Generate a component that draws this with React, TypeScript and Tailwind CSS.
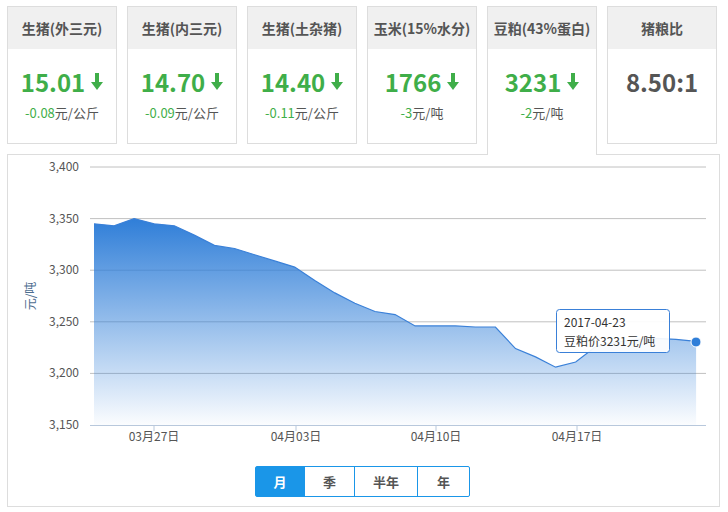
import React from "react";

const cards = [
  { title: "生猪(外三元)", value: "15.01", change: "-0.08", unit: "元/公斤" },
  { title: "生猪(内三元)", value: "14.70", change: "-0.09", unit: "元/公斤" },
  { title: "生猪(土杂猪)", value: "14.40", change: "-0.11", unit: "元/公斤" },
  { title: "玉米(15%水分)", value: "1766", change: "-3", unit: "元/吨" },
  { title: "豆粕(43%蛋白)", value: "3231", change: "-2", unit: "元/吨", active: true },
];

const values = [
  3345, 3343, 3350, 3345, 3343, 3334, 3324, 3321, 3315, 3309, 3303, 3290, 3278, 3268, 3260, 3257,
  3246, 3246, 3246, 3245, 3245, 3224, 3216, 3206, 3211, 3226, 3230, 3233, 3234, 3233, 3231,
];

const yOf = (v: number) => 166 + ((3400 - v) / 50) * 51.6;
const xOf = (i: number) => 93 + i * 20.07;

function DownArrow() {
  return (
    <svg width="12" height="18" viewBox="0 0 12 18" className="inline-block">
      <rect x="4" y="0" width="4" height="10" fill="#3fae49" />
      <path d="M0 9 L12 9 L6 17 Z" fill="#3fae49" />
    </svg>
  );
}

function Chart() {
  const pts = values.map((v, i) => `${xOf(i).toFixed(1)},${yOf(v).toFixed(1)}`);
  const line = "M" + pts.join(" L");
  const area = line + ` L${xOf(values.length - 1)},424 L93,424 Z`;
  const grid = [3400, 3350, 3300, 3250, 3200];
  const ticks = [
    { x: 153, l: "03月27日" },
    { x: 295, l: "04月03日" },
    { x: 435, l: "04月10日" },
    { x: 576, l: "04月17日" },
  ];
  return (
    <svg width="713" height="300" viewBox="7 154 713 300" className="block">
      <defs>
        <linearGradient id="g" x1="0" y1="0" x2="0" y2="1">
          <stop offset="0" stopColor="#2f7ed8" stopOpacity="1" />
          <stop offset="1" stopColor="#2f7ed8" stopOpacity="0.02" />
        </linearGradient>
      </defs>
      {grid.map((g) => (
        <line key={g} x1="89" x2="705" y1={yOf(g)} y2={yOf(g)} stroke="#c0c0c0" strokeWidth="1" />
      ))}
      <path d={area} fill="url(#g)" />
      <path d={line} fill="none" stroke="#3a80d8" strokeWidth="1.2" />
      <line x1="89" x2="705" y1="424.5" y2="424.5" stroke="#b8c8dc" />
      {ticks.map((t) => (
        <g key={t.l}>
          <line x1={t.x} x2={t.x} y1="424" y2="430" stroke="#b8c8dc" />
          <text x={t.x} y="440" fontSize="12" fill="#555" textAnchor="middle">{t.l}</text>
        </g>
      ))}
      {[3400, 3350, 3300, 3250, 3200, 3150].map((g) => (
        <text key={g} x="78" y={yOf(g) + 4} fontSize="12" fill="#555" textAnchor="end">
          {g.toLocaleString("en-US")}
        </text>
      ))}
      <text x="34" y="295" fontSize="12" fill="#4d6d8f" textAnchor="middle" transform="rotate(-90 34 295)">元/吨</text>
      <circle cx="695" cy="341" r="5" fill="#2f7ed8" stroke="#fff" strokeWidth="1" />
      <rect x="555.5" y="308.5" width="113" height="43" rx="3" fill="#fff" fillOpacity="0.92" stroke="#3a80d8" />
      <text x="563" y="326" fontSize="12" fill="#333">2017-04-23</text>
      <text x="563" y="345" fontSize="12" fill="#333">豆粕价3231元/吨</text>
    </svg>
  );
}

export default function App() {
  return (
    <div className="w-[728px] h-[512px] bg-white" style={{ fontFamily: '"Noto Sans CJK SC", "Noto Sans", sans-serif' }}>
      <div className="flex items-start gap-[10px] pt-[6px] pl-[7px] -mb-px relative z-10">
        {cards.map((c) => (
          <div
            key={c.title}
            className={`w-[110px] border border-[#dddddd] bg-white ${c.active ? "h-[149px] border-b-0" : "h-[138px]"}`}
          >
            <div className="h-[42px] bg-[#f0f0f0] flex items-center justify-center text-[14px] font-bold text-[#555]">
              {c.title}
            </div>
            <div className="flex items-center justify-center gap-[6px] mt-[19px] text-[24px] leading-[28px] font-bold text-[#3fae49]">
              <span>{c.value}</span>
              <DownArrow />
            </div>
            <div className="text-center text-[13px] mt-[7px] text-[#555]">
              <span className="text-[#3fae49]">{c.change}</span>
              {c.unit}
            </div>
          </div>
        ))}
        <div className="w-[110px] h-[138px] border border-[#dddddd] bg-white">
          <div className="h-[42px] bg-[#f0f0f0] flex items-center justify-center text-[14px] font-bold text-[#555]">
            猪粮比
          </div>
          <div className="text-center mt-[19px] text-[24px] leading-[28px] font-bold text-[#555]">8.50:1</div>
        </div>
      </div>
      <div className="ml-[7px] w-[713px] h-[353px] border border-[#dddddd]">
        <Chart />
        <div className="flex justify-center mt-[11px] pr-[2px]">
          <div className="flex border border-[#1a96e8] rounded-[2px] text-[13px] font-bold text-[#555] h-[31px]">
            <div className="w-[48px] flex items-center justify-center bg-[#1a96e8] text-white">月</div>
            <div className="w-[50px] flex items-center justify-center border-l border-[#1a96e8]">季</div>
            <div className="w-[63px] flex items-center justify-center border-l border-[#1a96e8]">半年</div>
            <div className="w-[52px] flex items-center justify-center border-l border-[#1a96e8]">年</div>
          </div>
        </div>
      </div>
    </div>
  );
}
